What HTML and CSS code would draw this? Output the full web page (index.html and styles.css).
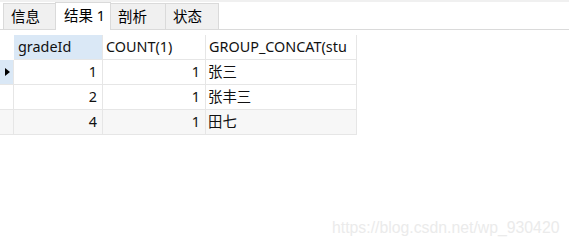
FILE: index.html
```html
<!DOCTYPE html>
<html>
<head>
<meta charset="utf-8">
<link rel="stylesheet" href="styles.css">
</head>
<body>
<div class="topband"></div>
<div class="tabstrip">
  <div class="tab">信息</div>
  <div class="tab active">结果 1</div>
  <div class="tab">剖析</div>
  <div class="tab">状态</div>
</div>
<div class="grid">
  <div class="cell ind head"></div>
  <div class="cell head sel">gradeId</div>
  <div class="cell head">COUNT(1)</div>
  <div class="cell head clip">GROUP_CONCAT(stu</div>

  <div class="cell ind cur"><span class="tri"></span></div>
  <div class="cell num">1</div>
  <div class="cell num">1</div>
  <div class="cell txt">张三</div>

  <div class="cell ind"></div>
  <div class="cell num">2</div>
  <div class="cell num">1</div>
  <div class="cell txt">张丰三</div>

  <div class="cell ind alt"></div>
  <div class="cell num alt">4</div>
  <div class="cell num alt">1</div>
  <div class="cell txt alt">田七</div>
</div>
<div class="watermark">https://blog.csdn.net/wp_930420</div>
</body>
</html>
```

FILE: styles.css
```css
html, body {
  margin: 0;
  padding: 0;
  background: #ffffff;
}
body {
  width: 569px;
  height: 249px;
  position: relative;
  overflow: hidden;
  font-family: "Noto Sans", "Noto Sans CJK SC", sans-serif;
  font-size: 14px;
  color: #111111;
}
.topband {
  height: 2px;
  background: #f0f0f0;
}
.tabstrip {
  display: flex;
  align-items: flex-end;
  height: 27px;
  border-bottom: 1px solid #dadada;
  padding-left: 3px;
}
.tab {
  box-sizing: border-box;
  height: 26px;
  width: 53px;
  background: #f0f0f0;
  border: 1px solid #dadada;
  border-bottom: none;
  margin-right: -1px;
  padding-left: 7px;
  line-height: 25px;
  font-size: 14.5px;
  color: #000;
}
.tab.active {
  width: 56px;
  height: 28px;
  margin-bottom: -1px;
  padding-left: 8px;
  background: #ffffff;
  position: relative;
  z-index: 1;
}
.tab:nth-child(3) { width: 56px; }
.tab:nth-child(4) { width: 54px; }
.grid {
  margin-top: 5px;
  display: grid;
  grid-template-columns: 14px 89px 103px 151px;
  grid-auto-rows: 25px;
  width: 357px;
  font-size: 14.4px;
}
.cell {
  box-sizing: border-box;
  border-right: 1px solid #e6e6e6;
  border-bottom: 1px solid #e6e6e6;
  line-height: 24px;
  white-space: nowrap;
  overflow: hidden;
  padding: 0 3px;
}
.head {
  background: #ffffff;
}
.head.sel {
  background: #dae8f6;
  padding-left: 4px;
}
.ind {
  padding: 0;
  display: flex;
  align-items: center;
}
.ind.head {
  border: none;
}
.ind.cur {
  background: #dae8f6;
}
.tri {
  width: 0;
  height: 0;
  border-top: 4px solid transparent;
  border-bottom: 4px solid transparent;
  border-left: 5px solid #000;
  margin-left: 5px;
}
.num {
  text-align: right;
  padding-right: 5px;
}
.txt {
  padding-left: 2px;
}
.alt {
  background: #f7f7f7;
}
.watermark {
  position: absolute;
  left: 332px;
  top: 219px;
  font-family: "Liberation Sans", Arial, sans-serif;
  font-size: 15.8px;
  color: #ebebeb;
  white-space: nowrap;
}
```
